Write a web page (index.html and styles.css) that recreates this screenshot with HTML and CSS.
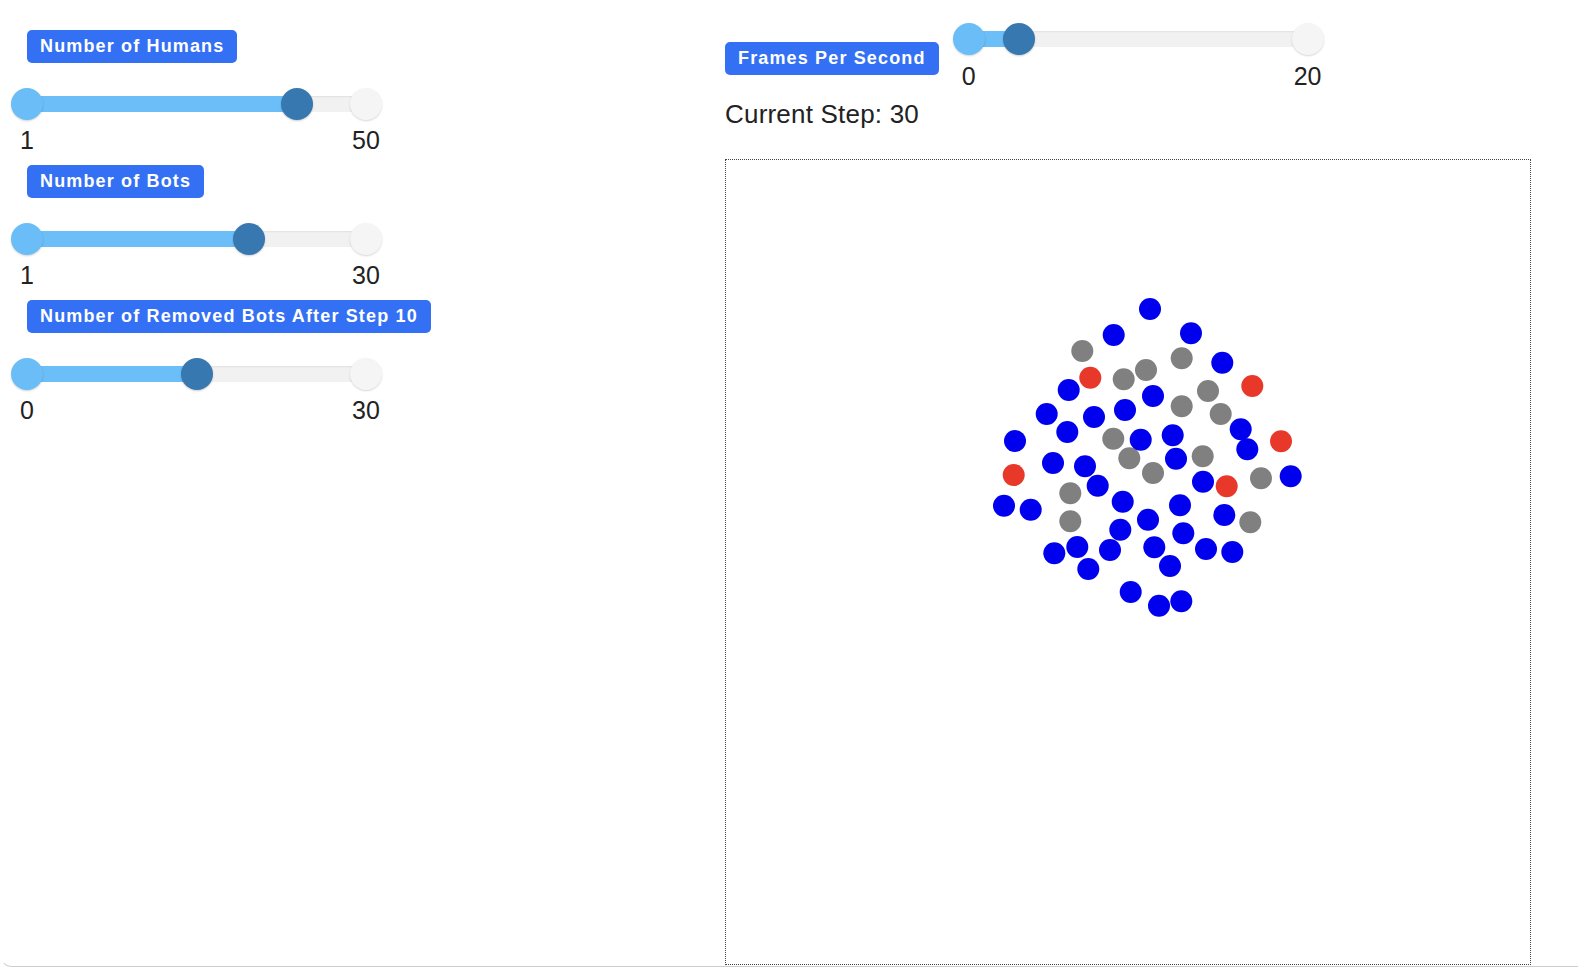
FILE: index.html
```html
<!DOCTYPE html>
<html lang="en">
<head>
<meta charset="utf-8">
<title>Bots and Humans Simulation</title>
<link rel="stylesheet" href="styles.css">
</head>
<body>
<div class="window">
  <div class="controls">
    <div class="group">
      <span class="badge">Number of Humans</span>
      <div class="range">
        <div class="slider">
          <div class="track"></div>
          <div class="fill" style="width:269.8px"></div>
          <div class="cap cap-min"></div>
          <div class="cap cap-max"></div>
          <div class="thumb" style="left:269.8px"></div>
        </div>
        <div class="ticks"><span>1</span><span>50</span></div>
      </div>
    </div>
    <div class="group">
      <span class="badge">Number of Bots</span>
      <div class="range">
        <div class="slider">
          <div class="track"></div>
          <div class="fill" style="width:222.1px"></div>
          <div class="cap cap-min"></div>
          <div class="cap cap-max"></div>
          <div class="thumb" style="left:222.1px"></div>
        </div>
        <div class="ticks"><span>1</span><span>30</span></div>
      </div>
    </div>
    <div class="group">
      <span class="badge">Number of Removed Bots After Step 10</span>
      <div class="range">
        <div class="slider">
          <div class="track"></div>
          <div class="fill" style="width:169.5px"></div>
          <div class="cap cap-min"></div>
          <div class="cap cap-max"></div>
          <div class="thumb" style="left:169.5px"></div>
        </div>
        <div class="ticks"><span>0</span><span>30</span></div>
      </div>
    </div>
  </div>

  <div class="sim">
    <div class="fps-row">
      <span class="badge">Frames Per Second</span>
      <div class="range">
        <div class="slider">
          <div class="track"></div>
          <div class="fill" style="width:50.85px"></div>
          <div class="cap cap-min"></div>
          <div class="cap cap-max"></div>
          <div class="thumb" style="left:50.85px"></div>
        </div>
        <div class="ticks"><span>0</span><span>20</span></div>
      </div>
    </div>
    <div class="step">Current Step: 30</div>
    <div class="canvas">
      <svg class="world" width="804" height="804" viewBox="0 0 804 804">
        <g class="bots">
          <circle cx="356.3" cy="191" r="11"/>
          <circle cx="455.7" cy="198.3" r="11"/>
          <circle cx="397.7" cy="219.3" r="11"/>
          <circle cx="420" cy="210" r="11"/>
          <circle cx="482" cy="231" r="11"/>
          <circle cx="455.7" cy="246.3" r="11"/>
          <circle cx="494.7" cy="254" r="11"/>
          <circle cx="387.3" cy="278.7" r="11"/>
          <circle cx="403.3" cy="298.3" r="11"/>
          <circle cx="427" cy="313" r="11"/>
          <circle cx="476.7" cy="296.3" r="11"/>
          <circle cx="344.3" cy="333.3" r="11"/>
          <circle cx="535" cy="318.3" r="11"/>
          <circle cx="344.3" cy="361.3" r="11"/>
          <circle cx="524.3" cy="362.3" r="11"/>
        </g>
        <g class="removed">
          <circle cx="364.3" cy="217.7" r="11"/>
          <circle cx="526.3" cy="226" r="11"/>
          <circle cx="555" cy="281.3" r="11"/>
          <circle cx="287.7" cy="315" r="11"/>
          <circle cx="500.7" cy="326.3" r="11"/>
        </g>
        <g class="humans">
          <circle cx="424" cy="149" r="11"/>
          <circle cx="387.7" cy="175" r="11"/>
          <circle cx="465" cy="173.3" r="11"/>
          <circle cx="496.3" cy="202.7" r="11"/>
          <circle cx="342.7" cy="230" r="11"/>
          <circle cx="427" cy="236" r="11"/>
          <circle cx="320.7" cy="254" r="11"/>
          <circle cx="368" cy="257" r="11"/>
          <circle cx="399" cy="250" r="11"/>
          <circle cx="341.3" cy="272" r="11"/>
          <circle cx="289" cy="281" r="11"/>
          <circle cx="414.7" cy="279.7" r="11"/>
          <circle cx="446.7" cy="275.3" r="11"/>
          <circle cx="514.7" cy="269.3" r="11"/>
          <circle cx="521.3" cy="289.3" r="11"/>
          <circle cx="327" cy="303" r="11"/>
          <circle cx="359" cy="306.3" r="11"/>
          <circle cx="450" cy="298.7" r="11"/>
          <circle cx="564.7" cy="316.3" r="11"/>
          <circle cx="371.7" cy="325.7" r="11"/>
          <circle cx="477" cy="321.7" r="11"/>
          <circle cx="278" cy="345.7" r="11"/>
          <circle cx="304.7" cy="349.7" r="11"/>
          <circle cx="396.7" cy="341.7" r="11"/>
          <circle cx="454" cy="345.3" r="11"/>
          <circle cx="498.3" cy="355" r="11"/>
          <circle cx="422" cy="359.7" r="11"/>
          <circle cx="394.3" cy="369.7" r="11"/>
          <circle cx="457.3" cy="373.3" r="11"/>
          <circle cx="351.3" cy="387" r="11"/>
          <circle cx="328.3" cy="393.3" r="11"/>
          <circle cx="384" cy="390" r="11"/>
          <circle cx="428.3" cy="387.3" r="11"/>
          <circle cx="480" cy="389" r="11"/>
          <circle cx="506.3" cy="392" r="11"/>
          <circle cx="362.3" cy="409" r="11"/>
          <circle cx="444" cy="406" r="11"/>
          <circle cx="404.7" cy="432" r="11"/>
          <circle cx="433" cy="445.7" r="11"/>
          <circle cx="455.3" cy="441.3" r="11"/>
        </g>
      </svg>
    </div>
  </div>
</div>
</body>
</html>
```

FILE: styles.css
```css
html, body {
  margin: 0;
  padding: 0;
  background: #ffffff;
  overflow: hidden;
}

body {
  font-family: "Liberation Sans", Arial, Helvetica, sans-serif;
  color: #222222;
}

.window {
  display: flex;
  align-items: flex-start;
  height: 967px;
  box-sizing: border-box;
  border-left: 1px solid transparent;
  border-bottom: 1px solid #c9cdd2;
  border-bottom-left-radius: 12px;
  overflow: hidden;
}

.controls {
  display: flex;
  flex-direction: column;
  width: 371px;
  padding: 30px 0 0 10px;
  flex: none;
}

.group {
  display: flex;
  flex-direction: column;
  align-items: flex-start;
  margin-bottom: 10px;
}

.badge {
  display: inline-block;
  height: 33px;
  line-height: 33px;
  padding: 0 13px;
  background: #3470f4;
  color: #ffffff;
  border-radius: 5px;
  font-weight: bold;
  font-size: 18px;
  letter-spacing: 1.15px;
  white-space: nowrap;
}

.group .badge {
  margin-left: 16px;
}

.group .range {
  margin-top: 25px;
}

.range {
  width: 371px;
  flex: none;
}

.slider {
  position: relative;
  width: 371px;
  height: 32px;
}

.track {
  position: absolute;
  left: 16px;
  right: 16px;
  top: 8px;
  height: 16px;
  background: #f1f1f1;
  box-shadow: inset 0 1px 2px rgba(0, 0, 0, 0.07);
}

.fill {
  position: absolute;
  left: 16px;
  top: 8px;
  height: 16px;
  background: #6bbef8;
}

.cap,
.thumb {
  position: absolute;
  top: 0;
  width: 32px;
  height: 32px;
  border-radius: 50%;
  box-sizing: border-box;
}

.cap-min {
  left: 0;
  background: #6bbdf7;
  box-shadow: 0 1px 2px rgba(0, 0, 0, 0.18);
}

.cap-max {
  right: 0;
  background: #f5f5f5;
  box-shadow: 0 1px 2px rgba(0, 0, 0, 0.16);
}

.thumb {
  background: #3878b0;
  box-shadow: 0 1px 2px rgba(0, 0, 0, 0.2);
}

.ticks {
  display: flex;
  justify-content: space-between;
  margin-top: 6px;
  font-size: 25px;
  line-height: 29px;
}

.ticks span {
  width: 32px;
  text-align: center;
}

.sim {
  display: flex;
  flex-direction: column;
  align-items: flex-start;
  margin-left: 343px;
  padding-top: 23px;
  flex: none;
}

.fps-row {
  display: flex;
  align-items: flex-start;
}

.fps-row .badge {
  margin-top: 19px;
}

.fps-row .range {
  margin-left: 14px;
}

.fps-row .ticks {
  margin-top: 7px;
}

.step {
  margin-top: 9px;
  font-size: 26px;
  line-height: 29px;
  letter-spacing: 0.2px;
}

.canvas {
  margin-top: 30px;
  width: 804px;
  height: 804px;
  border: 1px dotted #444444;
  flex: none;
}

.world {
  display: block;
}

.humans circle {
  fill: #0000ee;
}

.bots circle {
  fill: #808080;
}

.removed circle {
  fill: #e8382a;
}
```
